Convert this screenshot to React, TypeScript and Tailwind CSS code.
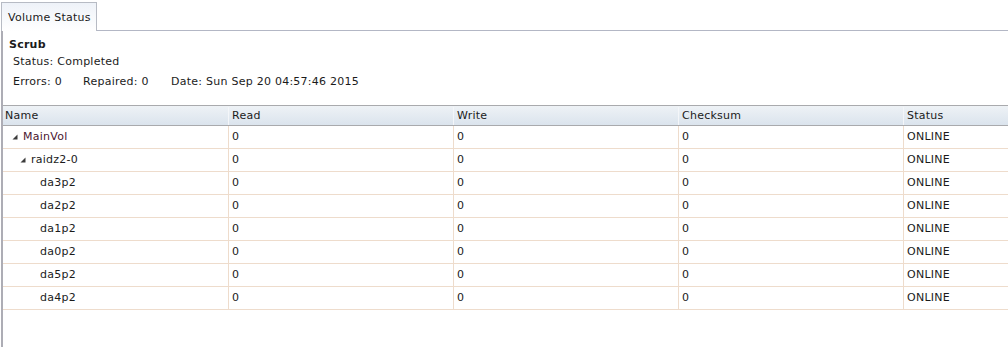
import React from "react"

type Row = {
  name: string
  depth: number
  expandable?: boolean
}

const rows: Row[] = [
  { name: "MainVol", depth: 0, expandable: true },
  { name: "raidz2-0", depth: 1, expandable: true },
  { name: "da3p2", depth: 2 },
  { name: "da2p2", depth: 2 },
  { name: "da1p2", depth: 2 },
  { name: "da0p2", depth: 2 },
  { name: "da5p2", depth: 2 },
  { name: "da4p2", depth: 2 },
]

const columns = ["Name", "Read", "Write", "Checksum", "Status"]

const Expander = () => (
  <svg width="6" height="6" viewBox="0 0 6 6" className="shrink-0">
    <polygon points="5.5,0.5 5.5,5.5 0.5,5.5" fill="#3b3b3b" />
  </svg>
)

const indent = ["pl-[9px]", "pl-[17px]", "pl-[37px]"]

export default function App() {
  return (
    <div className="h-[347px] w-[1008px] overflow-hidden bg-white text-[11px] tracking-[0.25px] text-[#1b1b1b] [font-family:'DejaVu_Sans',Verdana,sans-serif]">
      {/* tab strip */}
      <div className="flex h-[31px] items-end">
        <div className="ml-px flex h-[29px] w-[96px] shrink-0 items-center border border-b-0 border-[#b7bbc4] bg-gradient-to-b from-[#eef2f8] to-white pl-[6px] pt-[3px]">
          Volume Status
        </div>
        <div className="h-px flex-1 bg-[#b3b7c5]" />
      </div>

      <div className="ml-px h-[316px] border-l-2 border-[#adadb5]">
        <div className="pl-[6px] pt-[7px]">
          <div className="font-bold leading-[14px]">Scrub</div>
          <div className="pl-[4px] pt-[3px] leading-[14px]">Status: Completed</div>
          <div className="flex pl-[4px] pt-[6px] leading-[14px]">
            <span className="w-[70px]">Errors: 0</span>
            <span className="w-[88px]">Repaired: 0</span>
            <span>Date: Sun Sep 20 04:57:46 2015</span>
          </div>
        </div>

        <div className="mt-[16px] w-[1130px]">
          <div className="flex h-[21px] border-y border-[#a9aaad] bg-gradient-to-b from-[#eef2f6] to-[#dbe4ed] pt-px">
            {columns.map((c, i) => (
              <div
                key={c}
                className={`flex w-[225px] shrink-0 items-center ${i > 0 ? "border-l border-[#f4f6f9] pl-[3px]" : "pl-[2px]"}`}
              >
                {c}
              </div>
            ))}
          </div>
          {rows.map((r) => (
            <div key={r.name} className="flex h-[23px] border-b border-[#eedccc]">
              <div className={`flex w-[225px] shrink-0 items-center gap-[5px] ${indent[r.depth]}`}>
                {r.expandable && <Expander />}
                <span className={r.depth === 0 ? "text-[#4a1530]" : ""}>{r.name}</span>
              </div>
              <div className="flex w-[225px] shrink-0 items-center border-l border-[#eedccc] pl-[3px]">0</div>
              <div className="flex w-[225px] shrink-0 items-center border-l border-[#eedccc] pl-[3px]">0</div>
              <div className="flex w-[225px] shrink-0 items-center border-l border-[#eedccc] pl-[3px]">0</div>
              <div className="flex w-[225px] shrink-0 items-center border-l border-[#eedccc] pl-[3px]">ONLINE</div>
            </div>
          ))}
        </div>
      </div>
    </div>
  )
}
